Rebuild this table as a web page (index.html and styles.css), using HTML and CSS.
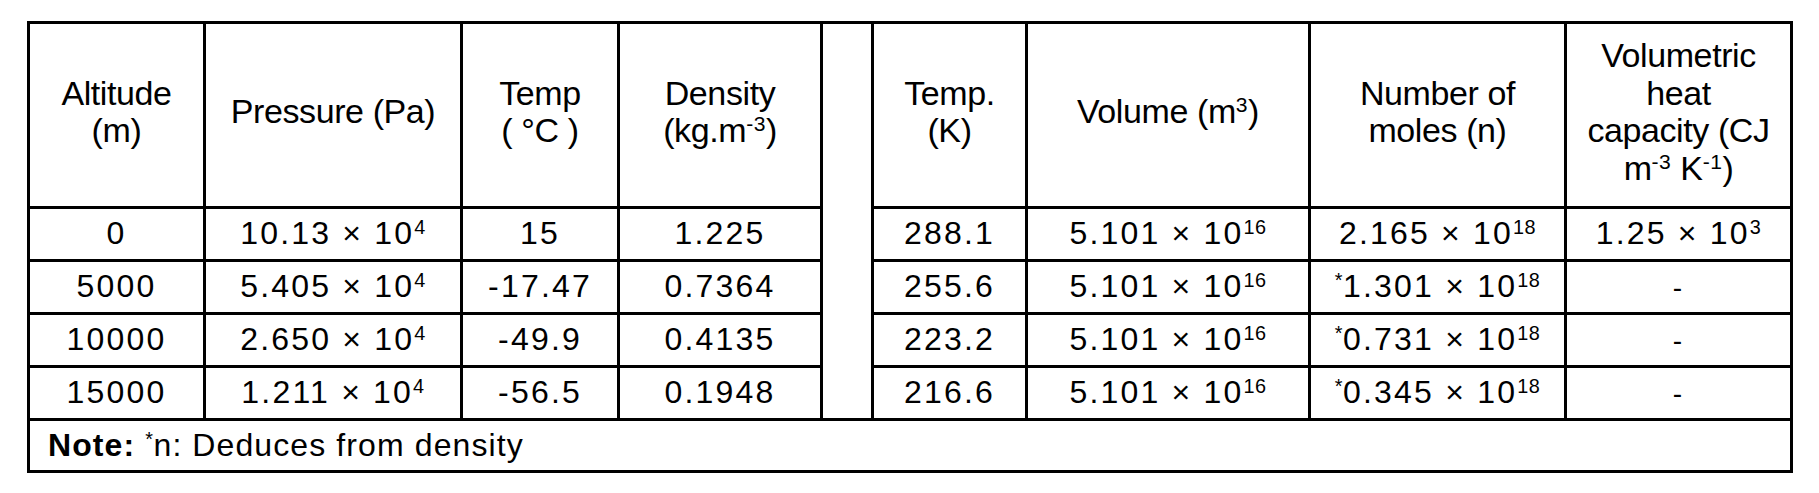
FILE: index.html
```html
<!DOCTYPE html>
<html lang="en">
<head>
<meta charset="utf-8">
<title>Atmosphere table</title>
<link rel="stylesheet" href="styles.css">
</head>
<body>
<div class="sheet">
  <div class="grid">
    <div class="cell head"><span>Altitude<br>(m)</span></div>
    <div class="cell head"><span>Pressure (Pa)</span></div>
    <div class="cell head"><span>Temp<br>( °C )</span></div>
    <div class="cell head"><span>Density<br>(kg.m<sup class="sup">-3</sup>)</span></div>
    <div class="spacer"></div>
    <div class="cell head"><span>Temp.<br>(K)</span></div>
    <div class="cell head"><span>Volume (m<sup class="sup">3</sup>)</span></div>
    <div class="cell head"><span>Number of<br>moles (n)</span></div>
    <div class="cell head"><span>Volumetric<br>heat<br>capacity (CJ<br>m<sup class="sup">-3</sup> K<sup class="sup">-1</sup>)</span></div>

    <div class="cell data"><span>0</span></div>
    <div class="cell data"><span>10.13 × 10<sup class="sup">4</sup></span></div>
    <div class="cell data"><span>15</span></div>
    <div class="cell data"><span>1.225</span></div>
    <div class="cell data"><span>288.1</span></div>
    <div class="cell data"><span>5.101 × 10<sup class="sup">16</sup></span></div>
    <div class="cell data"><span>2.165 × 10<sup class="sup">18</sup></span></div>
    <div class="cell data"><span>1.25 × 10<sup class="sup">3</sup></span></div>

    <div class="cell data"><span>5000</span></div>
    <div class="cell data"><span>5.405 × 10<sup class="sup">4</sup></span></div>
    <div class="cell data"><span>-17.47</span></div>
    <div class="cell data"><span>0.7364</span></div>
    <div class="cell data"><span>255.6</span></div>
    <div class="cell data"><span>5.101 × 10<sup class="sup">16</sup></span></div>
    <div class="cell data"><span><sup class="sup">*</sup>1.301 × 10<sup class="sup">18</sup></span></div>
    <div class="cell data dash"><span>-</span></div>

    <div class="cell data"><span>10000</span></div>
    <div class="cell data"><span>2.650 × 10<sup class="sup">4</sup></span></div>
    <div class="cell data"><span>-49.9</span></div>
    <div class="cell data"><span>0.4135</span></div>
    <div class="cell data"><span>223.2</span></div>
    <div class="cell data"><span>5.101 × 10<sup class="sup">16</sup></span></div>
    <div class="cell data"><span><sup class="sup">*</sup>0.731 × 10<sup class="sup">18</sup></span></div>
    <div class="cell data dash"><span>-</span></div>

    <div class="cell data"><span>15000</span></div>
    <div class="cell data"><span>1.211 × 10<sup class="sup">4</sup></span></div>
    <div class="cell data"><span>-56.5</span></div>
    <div class="cell data"><span>0.1948</span></div>
    <div class="cell data"><span>216.6</span></div>
    <div class="cell data"><span>5.101 × 10<sup class="sup">16</sup></span></div>
    <div class="cell data"><span><sup class="sup">*</sup>0.345 × 10<sup class="sup">18</sup></span></div>
    <div class="cell data dash"><span>-</span></div>

    <div class="note"><span><b>Note:</b> <sup class="sup">*</sup>n: Deduces from density</span></div>
  </div>
</div>
</body>
</html>
```
FILE: styles.css
```css
body {
  margin: 0;
  background: #fff;
  color: #000;
  font-family: "Liberation Sans", Arial, sans-serif;
}

.sheet {
  padding: 21px 0 0 27px;
}

.grid {
  display: inline-grid;
  grid-template-columns: 173px 254px 154px 200px 48px 151px 280px 253px 223px;
  grid-template-rows: 182px 50px 50px 50px 50px 49px;
  gap: 3px;
  padding: 3px;
  background: #000;
}

.cell {
  background: #fff;
  display: flex;
  align-items: center;
  justify-content: center;
  text-align: center;
}

.head {
  font-size: 34px;
  line-height: 37.5px;
  letter-spacing: -0.4px;
  padding-bottom: 6px;
}

.data {
  font-size: 32px;
  letter-spacing: 2.2px;
  padding-bottom: 2px;
}

.dash {
  padding-top: 4px;
  font-size: 28px;
}

.spacer {
  background: #fff;
  grid-column: 5;
  grid-row: 1 / span 5;
}

.note {
  grid-column: 1 / -1;
  background: #fff;
  display: flex;
  align-items: center;
  padding-left: 18px;
  font-size: 32px;
  letter-spacing: 1.1px;
}

.sup {
  font-size: 0.62em;
  vertical-align: 0.5em;
  line-height: 0;
  letter-spacing: 0.5px;
}
```
